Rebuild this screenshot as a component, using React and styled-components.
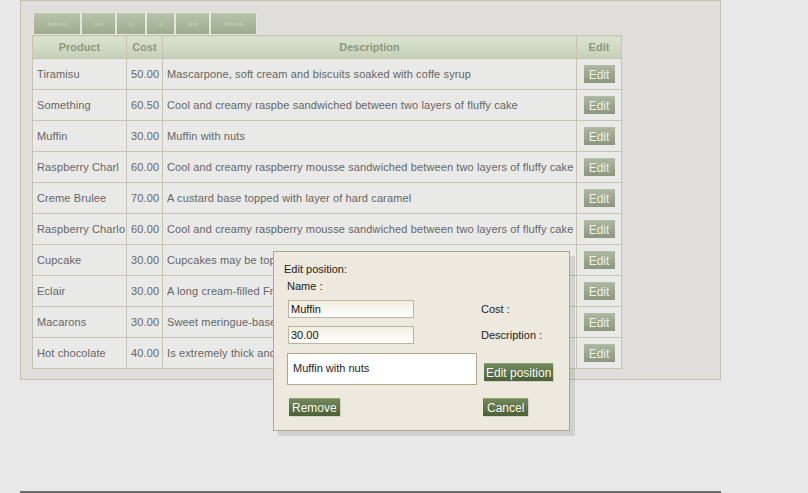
import React from "react";
import styled, { createGlobalStyle } from "styled-components";

const GlobalStyle = createGlobalStyle`
  html, body { margin: 0; padding: 0; background: #e8e8e8; }
  body { font-family: "Liberation Sans", Arial, sans-serif; font-size: 11px; color: #666; }
  * { box-sizing: border-box; }
`;

const Page = styled.div`
  position: relative;
  width: 808px;
  height: 493px;
  overflow: hidden;
  padding: 0 0 0 20px;
`;

const Panel = styled.div`
  width: 701px;
  background: #dfdeda;
  border: 1px solid #c3c0ae;
  padding: 11px 12px 10px 11px;
`;

const Pager = styled.div`
  display: flex;
  height: 23px;
  margin-left: 1px;
`;

const PageBtn = styled.button`
  height: 23px;
  padding: 0;
  width: ${(p) => p.$w}px;
  border: 1px solid #e6e6de;
  margin: 0;
  background: linear-gradient(#b9c4aa, #9fab8f);
  color: #cdd5c2;
  font-family: "Liberation Sans", Arial, sans-serif;
  font-size: 9px;
  cursor: pointer;
`;

const Table = styled.table`
  border-collapse: collapse;
  table-layout: fixed;
  width: 589px;
  font-size: 11px;
`;

const Th = styled.th`
  height: 23px;
  padding: 0;
  border: 1px solid #c6c4b0;
  background: linear-gradient(#dbe3d0, #c6d0b7);
  color: #8c987c;
  font-weight: bold;
  font-size: 11px;
  text-align: center;
`;

const Td = styled.td`
  height: 31px;
  padding: 0 4px;
  border: 1px solid #c6c4b0;
  background: #e9e9e7;
  color: #666;
  letter-spacing: 0.12px;
  white-space: nowrap;
  overflow: hidden;
  text-align: ${(p) => (p.$center ? "center" : "left")};
`;

const EditBtn = styled.button`
  width: 31px;
  height: 18px;
  padding: 0;
  border: none;
  border-top: 1px solid #b4bca6;
  background: linear-gradient(#adb6a0, #8c957d);
  color: #eef2e8;
  font-family: "Liberation Sans", Arial, sans-serif;
  font-size: 12px;
  vertical-align: middle;
  cursor: pointer;
`;

const Footer = styled.div`
  width: 701px;
  margin-top: 111px;
  border-top: 2px solid #6b6b6b;
`;

const Dialog = styled.div`
  position: absolute;
  left: 273px;
  top: 251px;
  width: 297px;
  height: 180px;
  background: #ede9de;
  border: 1px solid #aba68d;
  box-shadow: 5px 5px 0 rgba(0, 0, 0, 0.1);
  padding: 11px 0 0 10px;
  color: #222;
  font-size: 11px;
`;

const Title = styled.div`
  line-height: 13px;
`;

const Label = styled.div`
  line-height: 13px;
  padding-left: ${(p) => p.$indent || 0}px;
  margin-top: ${(p) => p.$mt || 0}px;
  align-self: center;
`;

const FormGrid = styled.div`
  display: grid;
  grid-template-columns: 194px auto;
  margin-left: 3px;
  margin-top: 7px;
  row-gap: 8px;
`;

const TextInput = styled.input`
  width: 126px;
  height: 18px;
  margin-left: 1px;
  padding: 0 2px;
  border: 1px solid #bbb69e;
  background: linear-gradient(#f2eee0, #ffffff);
  font-family: "Liberation Sans", Arial, sans-serif;
  font-size: 11px;
  color: #111;
  outline: none;
`;

const TextArea = styled.textarea`
  width: 190px;
  height: 32px;
  margin-top: 1px;
  padding: 8px 5px 0;
  border: 1px solid #aca78d;
  background: #fff;
  font-family: "Liberation Sans", Arial, sans-serif;
  font-size: 11px;
  color: #222;
  resize: none;
  outline: none;
  overflow: hidden;
`;

const GreenBtn = styled.button`
  justify-self: start;
  align-self: ${(p) => p.$align || "start"};
  margin-left: ${(p) => p.$ml || 0}px;
  margin-top: ${(p) => p.$mt || 0}px;
  margin-bottom: ${(p) => p.$mb || 0}px;
  height: 18px;
  padding: 0 ${(p) => p.$px || 4}px;
  border: none;
  border-top: 1px solid #8fa276;
  background: linear-gradient(#73895a, #4b6035);
  color: #fff;
  font-family: "Liberation Sans", Arial, sans-serif;
  font-size: 12px;
  line-height: 16px;
  text-shadow: 0 0 1px rgba(0, 0, 0, 0.3);
  box-shadow: 1px 1px 0 rgba(0, 0, 0, 0.1);
  cursor: pointer;
`;

const rows = [
  ["Tiramisu", "50.00", "Mascarpone, soft cream and biscuits soaked with coffe syrup"],
  ["Something", "60.50", "Cool and creamy raspbe sandwiched between two layers of fluffy cake"],
  ["Muffin", "30.00", "Muffin with nuts"],
  ["Raspberry Charl", "60.00", "Cool and creamy raspberry mousse sandwiched between two layers of fluffy cake"],
  ["Creme Brulee", "70.00", "A custard base topped with layer of hard caramel"],
  ["Raspberry Charlo", "60.00", "Cool and creamy raspberry mousse sandwiched between two layers of fluffy cake"],
  ["Cupcake", "30.00", "Cupcakes may be topped with frosting or other cake decorations"],
  ["Eclair", "30.00", "A long cream-filled French pastry"],
  ["Macarons", "30.00", "Sweet meringue-based confection"],
  ["Hot chocolate", "40.00", "Is extremely thick and rich"],
];

const pages = [
  ["\u00ab\u00ab\u00ab\u00ab", 48],
  ["\u00ab\u00ab", 35],
  ["\u00ab", 30],
  ["\u00bb", 29],
  ["\u00bb\u00bb", 35],
  ["\u00bb\u00bb\u00bb\u00bb", 47],
];

export default function App() {
  return (
    <>
      <GlobalStyle />
      <Page>
        <Panel>
          <Pager>
            {pages.map(([t, w], i) => (
              <PageBtn key={i} $w={w}>{t}</PageBtn>
            ))}
          </Pager>
          <Table>
            <colgroup>
              <col style={{ width: 94 }} />
              <col style={{ width: 36 }} />
              <col style={{ width: 414 }} />
              <col style={{ width: 45 }} />
            </colgroup>
            <thead>
              <tr>
                <Th>Product</Th>
                <Th>Cost</Th>
                <Th>Description</Th>
                <Th>Edit</Th>
              </tr>
            </thead>
            <tbody>
              {rows.map(([name, cost, desc]) => (
                <tr key={name}>
                  <Td>{name}</Td>
                  <Td>{cost}</Td>
                  <Td>{desc}</Td>
                  <Td $center>
                    <EditBtn>Edit</EditBtn>
                  </Td>
                </tr>
              ))}
            </tbody>
          </Table>
        </Panel>
        <Footer />
        <Dialog>
          <Title>Edit position:</Title>
          <Label $indent={3} $mt={4}>Name :</Label>
          <FormGrid>
            <TextInput defaultValue="Muffin" />
            <Label $mt={0}>Cost :</Label>
            <TextInput defaultValue="30.00" />
            <Label $mt={0}>Description :</Label>
            <TextArea defaultValue="Muffin with nuts" />
            <GreenBtn $align="end" $ml={3} $mb={4} $px={2}>Edit position</GreenBtn>
            <GreenBtn $ml={2} $mt={5} $px={3}>Remove</GreenBtn>
            <GreenBtn $ml={2} $mt={5} $px={4}>Cancel</GreenBtn>
          </FormGrid>
        </Dialog>
      </Page>
    </>
  );
}
